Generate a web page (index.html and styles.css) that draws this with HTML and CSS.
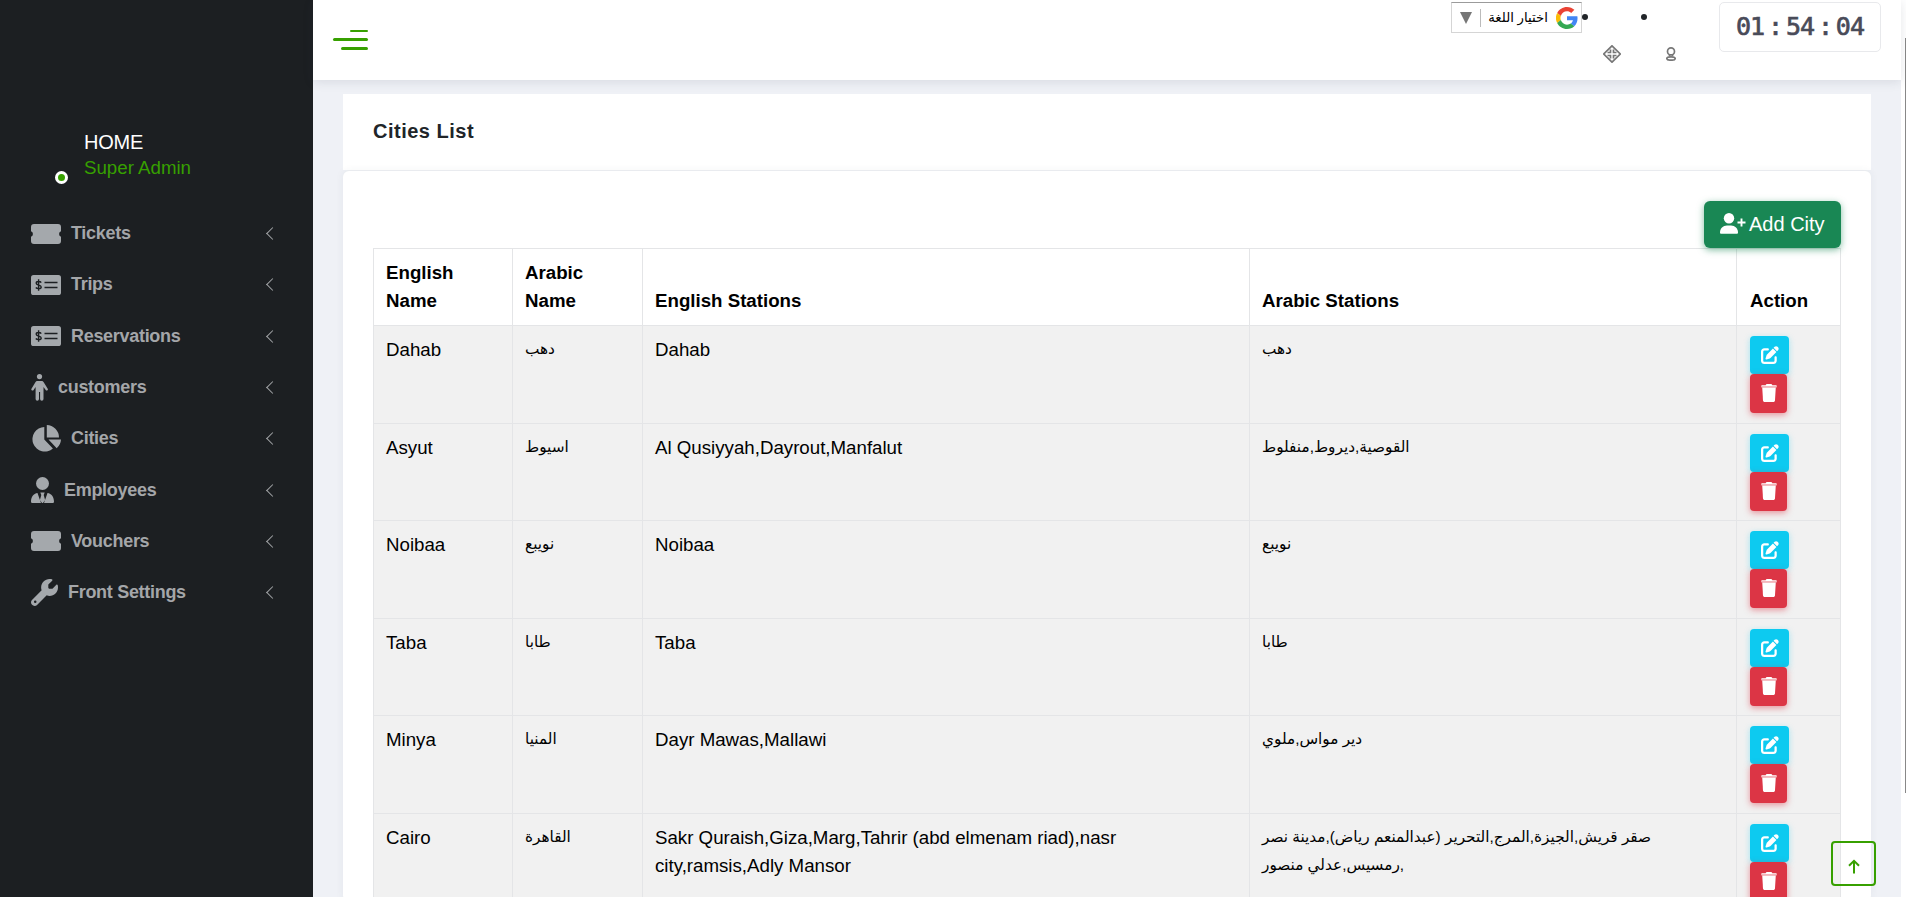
FILE: index.html
```html
<!DOCTYPE html>
<html lang="en">
<head>
<meta charset="utf-8">
<title>Cities List</title>
<link rel="stylesheet" href="styles.css">
</head>
<body>
<svg class="defs" width="0" height="0">
  <symbol id="ticket" viewBox="0 0 30 20"><path d="M3 0h24a3 3 0 0 1 3 3v4.200a3 3 0 0 0 0 5.600V17a3 3 0 0 1-3 3H3a3 3 0 0 1-3-3v-4.200a3 3 0 0 0 0-5.600V3a3 3 0 0 1 3-3z"/></symbol>
  <symbol id="check" viewBox="0 0 30 20"><rect width="30" height="20" rx="2.600"/><path d="M13.500 7.500h13M13.500 12.500h13M10.200 7.600C9.500 6.300 5.200 5.900 5.200 8.200s5 1.400 5 3.700-4.300 2-5.400.6M7.600 4.300v11.500" fill="none" stroke="#1c1f22" stroke-width="1.400"/></symbol>
  <symbol id="person" viewBox="0 0 17 27"><circle cx="8.500" cy="2.600" r="2.600"/><path d="M6.500 7h4c1 0 1.700.5 2.200 1.300l4 6.500c.8 1.300-1.200 2.400-2 1.200L12.500 13v12a1.700 1.700 0 0 1-3.400 0v-7H8v7a1.700 1.700 0 0 1-3.400 0V13l-2 3c-.9 1.300-2.900.1-2.100-1.200l3.900-6.500C4.900 7.500 5.600 7 6.500 7z"/></symbol>
  <symbol id="pie" viewBox="0 0 30 27"><path d="M13.300 2v12.500l8.600 9A12.300 12.300 0 1 1 13.300 2zM15.800 0A12.500 12.500 0 0 1 28 12.400H15.800zM17.500 14.500H30a12.500 12.500 0 0 1-4.300 8.700z"/></symbol>
  <symbol id="tie" viewBox="0 0 23 26"><circle cx="11.500" cy="6.500" r="6.500"/><path d="M6.500 16 10 26H1.200A1.200 1.200 0 0 1 0 24.800C0 20 2.500 16.500 6.500 16zM16.500 16 13 26h8.800a1.200 1.200 0 0 0 1.200-1.200c0-4.800-2.500-8.300-6.500-8.800zM9.300 15.500h4.400L12.700 18l1.400 5-2.100 3h-1l-2.100-3 1.400-5z"/></symbol>
  <symbol id="wrench" viewBox="0 0 512 512"><path d="M352 320c88 0 160-72 160-160 0-15-2-30-6-44-3-11-17-14-25-6l-69 69c-3 3-7 5-11 5h-57c-9 0-16-7-16-16v-57c0-4 2-8 5-11l69-69c8-8 5-22-6-25C382 2 367 0 352 0 264 0 192 72 192 160c0 19 3 37 10 54L19 397c-12 12-19 29-19 46 0 38 31 69 69 69 17 0 34-7 46-19l183-183c17 7 35 10 54 10zM80 408a24 24 0 1 1 0 48 24 24 0 0 1 0-48z"/></symbol>
  <symbol id="edit" viewBox="0 0 512 512"><path d="M472 22c-23-23-62-23-85 0l-30 30 98 98 30-30c23-23 23-61 0-84zM172 241c-6 6-11 13-13 22l-30 89c-3 8-1 18 6 24s16 9 24 6l89-30c8-3 16-7 22-13l168-168-98-98zM96 64c-53 0-96 43-96 96v256c0 53 43 96 96 96h256c53 0 96-43 96-96v-96c0-18-14-32-32-32s-32 14-32 32v96c0 18-14 32-32 32H96c-18 0-32-14-32-32V160c0-18 14-32 32-32h96c18 0 32-14 32-32s-14-32-32-32z"/></symbol>
  <symbol id="trash" viewBox="0 0 448 512"><path d="M135 18 128 32H32C14 32 0 46 0 64h448c0-18-14-32-32-32h-96l-7-14C307 7 296 0 284 0H164c-12 0-23 7-29 18z"/><path opacity=".7" d="M0 64h448v14q0 18-18 18H18Q0 96 0 78z"/><path d="M32 96h384l-21 371c-2 25-23 45-48 45H101c-25 0-46-20-48-45z"/></symbol>
</svg>

<aside class="sidebar">
  <div class="profile">
    <span class="status"></span>
    <div><div class="name">HOME</div><div class="role">Super Admin</div></div>
  </div>
  <nav class="menu">
    <a class="item"><svg width="30" height="20"><use href="#ticket"/></svg><span class="label">Tickets</span><i class="chev"></i></a>
    <a class="item"><svg width="30" height="20"><use href="#check"/></svg><span class="label">Trips</span><i class="chev"></i></a>
    <a class="item"><svg width="30" height="20"><use href="#check"/></svg><span class="label">Reservations</span><i class="chev"></i></a>
    <a class="item"><svg width="17" height="27"><use href="#person"/></svg><span class="label">customers</span><i class="chev"></i></a>
    <a class="item"><svg width="30" height="27"><use href="#pie"/></svg><span class="label">Cities</span><i class="chev"></i></a>
    <a class="item"><svg width="23" height="26"><use href="#tie"/></svg><span class="label">Employees</span><i class="chev"></i></a>
    <a class="item"><svg width="30" height="20"><use href="#ticket"/></svg><span class="label">Vouchers</span><i class="chev"></i></a>
    <a class="item"><svg width="27" height="27"><use href="#wrench"/></svg><span class="label">Front Settings</span><i class="chev"></i></a>
  </nav>
</aside>

<div class="page">
  <header class="topbar">
    <div class="burger"><i></i><i></i><i></i></div>
    <div class="tools">
      <div class="translate">
        <span class="tri"></span><span class="lang" dir="rtl">اختيار اللغة</span>
        <svg width="22" height="22" viewBox="0 0 48 48"><path fill="#EA4335" d="M24 9.500c3.500 0 6.700 1.200 9.200 3.600l6.900-6.900C35.900 2.400 30.500 0 24 0 14.600 0 6.500 5.400 2.600 13.200l8 6.200C12.400 13.700 17.700 9.500 24 9.500z"/><path fill="#4285F4" d="M47 24.600c0-1.600-.2-3.100-.4-4.600H24v9h12.900c-.6 3-2.300 5.500-4.800 7.200l7.700 6C44.400 38 47 31.800 47 24.600z"/><path fill="#FBBC05" d="M10.500 28.600A14.500 14.500 0 0 1 10.500 19.400l-8-6.200a24 24 0 0 0 0 21.600z"/><path fill="#34A853" d="M24 48c6.500 0 11.900-2.100 15.900-5.800l-7.700-6c-2.200 1.500-4.900 2.300-8.200 2.300-6.300 0-11.600-4.200-13.500-9.900l-8 6.200C6.500 42.600 14.600 48 24 48z"/></svg>
      </div>
      <div class="tool tool-move"><b class="dot"></b>
        <svg width="18" height="18" viewBox="0 0 18 18"><path d="M9 .8 17.200 9 9 17.200.8 9z"/><path d="M7.500 4.500v3h-3M10.500 4.500v3h3M4.500 10.500h3v3M13.500 10.500h-3v3"/></svg>
      </div>
      <div class="tool tool-user"><b class="dot"></b>
        <svg width="10" height="14" viewBox="0 0 10 14"><circle cx="5" cy="4.400" r="3.500"/><path d="M3.500 7.500v2M6.500 7.500v2"/><ellipse cx="5" cy="11.500" rx="4.200" ry="1.700"/></svg>
      </div>
      <div class="clock"><span>01</span><span>:</span><span>54</span><span>:</span><span>04</span></div>
    </div>
  </header>

  <main class="content">
    <h1 class="title">Cities List</h1>
    <section class="card">
      <div class="actions"><a class="add"><svg width="26" height="21" viewBox="0 0 26 21"><circle cx="9" cy="5.300" r="5.200"/><path d="M7 12.500h4c4 0 7 3 7 7 0 .8-.5 1.300-1.300 1.300H1.300C.5 20.800 0 20.300 0 19.500c0-4 3-7 7-7z"/><path d="M21.500 5.500v8M17.500 9.500h8" stroke="#fff" stroke-width="1.900"/></svg>Add City</a></div>
      <table class="grid">
        <colgroup><col class="c1"><col class="c2"><col class="c3"><col class="c4"><col class="c5"></colgroup>
        <thead><tr><th>English Name</th><th>Arabic Name</th><th>English Stations</th><th>Arabic Stations</th><th>Action</th></tr></thead>
        <tbody id="rows"></tbody>
      </table>
    </section>
  </main>
</div>
<div class="scroll"><i></i></div>
<a class="totop"><svg width="12" height="15" viewBox="0 0 12 15"><path d="M6 14.500V2M1 6.800 6 1.800l5 5"/></svg></a>
<script src="app.js"></script>
</body>
</html>
```
FILE: styles.css
```css
* { box-sizing: border-box; }
body { margin: 0; width: 1906px; height: 897px; overflow: hidden; display: flex; background: #eff1f6; font-family: "Liberation Sans", Arial, sans-serif; font-size: 18.700px; color: #000; }
.defs { position: absolute; }
.sidebar { width: 313px; flex: none; background: #1c1f22; padding-top: 129px; }
.profile { display: flex; gap: 16px; padding-left: 55px; height: 79px; line-height: 26px; }
.status { width: 13px; height: 13px; margin-top: 42px; border: 3px solid #fff; border-radius: 50%; background: #37a000; }
.name { color: #fff; font-size: 20px; letter-spacing: -.2px; }
.role { color: #37a000; font-size: 18.700px; }
.menu { display: flex; flex-direction: column; }
.item { display: flex; align-items: center; height: 51.300px; padding: 0 38px 0 31px; color: #a4a6a9; font-weight: 700; font-size: 18px; letter-spacing: -.3px; }
.item svg { fill: #a4a8ac; flex: none; }
.label { margin-left: 10px; flex: 1; }
.chev { width: 9px; height: 9px; margin-right: -2px; border-left: 1px solid #a4a6a9; border-bottom: 1px solid #a4a6a9; transform: rotate(45deg); }
.page { width: 1588px; flex: none; }
.topbar { height: 80px; background: #fff; display: flex; justify-content: space-between; box-shadow: 0 2px 10px rgba(50, 60, 80, .12); position: relative; }
.burger { width: 35px; margin: 30px 0 0 20px; display: flex; flex-direction: column; align-items: flex-end; }
.burger i { height: 3px; width: 35px; margin-bottom: 6px; border-radius: 2px; background: #37a000; }
.burger i:first-child { width: 18px; height: 2px; }
.burger i:last-child { width: 27px; }
.tools { display: flex; align-items: flex-start; padding-right: 20px; }
.translate { display: flex; align-items: center; width: 131px; height: 31px; margin-top: 2px; padding: 0 3px 0 8px; border: 1px solid #d5d5d5; border-top-color: #9b9b9b; font-size: 13.300px; }
.tri { border: 6.500px solid transparent; border-top: 12px solid #767676; border-bottom: 0; }
.lang { flex: 1; margin-left: 8px; padding-left: 6px; padding-right: 8px; border-left: 1px solid #bbb; line-height: 18px; font-family: "Liberation Sans", "DejaVu Sans", sans-serif; white-space: nowrap; overflow: hidden; }
.tool { display: flex; flex-direction: column; width: 59px; }
.dot { width: 6px; height: 6px; border-radius: 50%; margin: 14px 0 0; background: #212529; }
.tool svg { fill: none; stroke: #777; stroke-width: 1.700; }
.tool-move svg { margin: 25px 0 0 21px; }
.tool-user { width: 78px; }
.tool-user svg { margin: 27px 0 0 25px; }
.clock { width: 162px; height: 50px; margin-top: 2px; border: 1px solid #e8e9ec; border-radius: 5px; display: flex; align-items: center; justify-content: space-between; padding: 0 16px; color: #494b59; font: 25px/50px "DejaVu Sans Mono", monospace; letter-spacing: -1px; -webkit-text-stroke: .7px #494b59; }
.clock span:nth-child(even) { width: 14px; }
.content { padding: 14px 30px 0; }
.title { margin: 0; height: 76px; padding-left: 30px; background: #fff; font-size: 20px; line-height: 74px; letter-spacing: .5px; color: #212529; }
.card { height: 730px; margin-top: 1px; padding: 30px 30px 0; background: #fff; border-radius: 6px; box-shadow: 0 0 8px rgba(50, 60, 80, .06), 0 -1px 0 #eef0f3; }
.actions { display: flex; justify-content: flex-end; height: 47px; }
.add { position: relative; display: flex; align-items: center; gap: 3px; width: 137px; height: 47px; padding-left: 16px; border-radius: 6px; background: #198754; color: #fff; fill: #fff; font-size: 20px; white-space: nowrap; box-shadow: 0 2px 7px rgba(25, 135, 84, .55); }
.add svg { margin-top: -2px; }
.grid { width: 1468px; table-layout: fixed; border-collapse: collapse; line-height: 28px; }
.c1 { width: 139px; } .c2 { width: 130px; } .c3 { width: 607px; } .c4 { width: 487px; } .c5 { width: 104px; }
.grid th, .grid td { border: 1px solid #e4e5e7; padding: 10px 12px; text-align: left; }
.grid th { height: 77px; vertical-align: bottom; }
.grid th:first-child, .grid th:nth-child(2) { padding-right: 30px; }
.grid th:last-child, .grid td:last-child { padding-left: 13px; }
.grid td { height: 98px; vertical-align: top; background: #f1f1f1; padding-bottom: 6px; }
.grid tr:nth-child(even) td { height: 97px; }
.grid td.ar { font-family: "Liberation Sans", "DejaVu Sans", sans-serif; font-size: 15.300px; padding-top: 9px; }
.btn { display: flex; align-items: center; justify-content: center; width: 39px; height: 38px; padding-bottom: 1px; border-radius: 4px; background: #0dcaf0; fill: #fff; box-shadow: 0 2px 6px rgba(13, 202, 240, .35); }
.btn.del { width: 37px; height: 39px; padding-bottom: 2px; background: #dc3545; box-shadow: 0 2px 6px rgba(220, 53, 69, .5); }
.scroll { width: 5px; background: #fff; padding: 38px 0 0 4px; }
.scroll i { display: block; height: 755px; background: #888; }
.totop { position: absolute; left: 1831px; top: 841px; width: 45px; height: 45px; border: 2px solid #37a000; border-radius: 4px; display: flex; align-items: center; justify-content: center; padding-top: 6px; }
.totop svg { fill: none; stroke: #37a000; stroke-width: 2; }
```
FILE: app.js
```js
const cities = [
  ["Dahab", "دهب", "Dahab", "دهب"],
  ["Asyut", "اسيوط", "Al Qusiyyah,Dayrout,Manfalut", "القوصية,ديروط,منفلوط"],
  ["Noibaa", "نويبع", "Noibaa", "نويبع"],
  ["Taba", "طابا", "Taba", "طابا"],
  ["Minya", "المنيا", "Dayr Mawas,Mallawi", "دير مواس,ملوي"],
  ["Cairo", "القاهرة", "Sakr Quraish,Giza,Marg,Tahrir (abd elmenam riad),nasr city,ramsis,Adly Mansor", "صقر قريش,الجيزة,المرج,التحرير (عبدالمنعم رياض),مدينة نصر ,رمسيس,عدلي منصور"]
];
document.getElementById("rows").innerHTML = cities.map(c =>
  `<tr><td>${c[0]}</td><td class="ar">${c[1]}</td><td>${c[2]}</td><td class="ar">${c[3]}</td><td>` +
  `<a class="btn"><svg width="18" height="18"><use href="#edit"/></svg></a>` +
  `<a class="btn del"><svg width="16" height="18"><use href="#trash"/></svg></a></td></tr>`).join("");
```
